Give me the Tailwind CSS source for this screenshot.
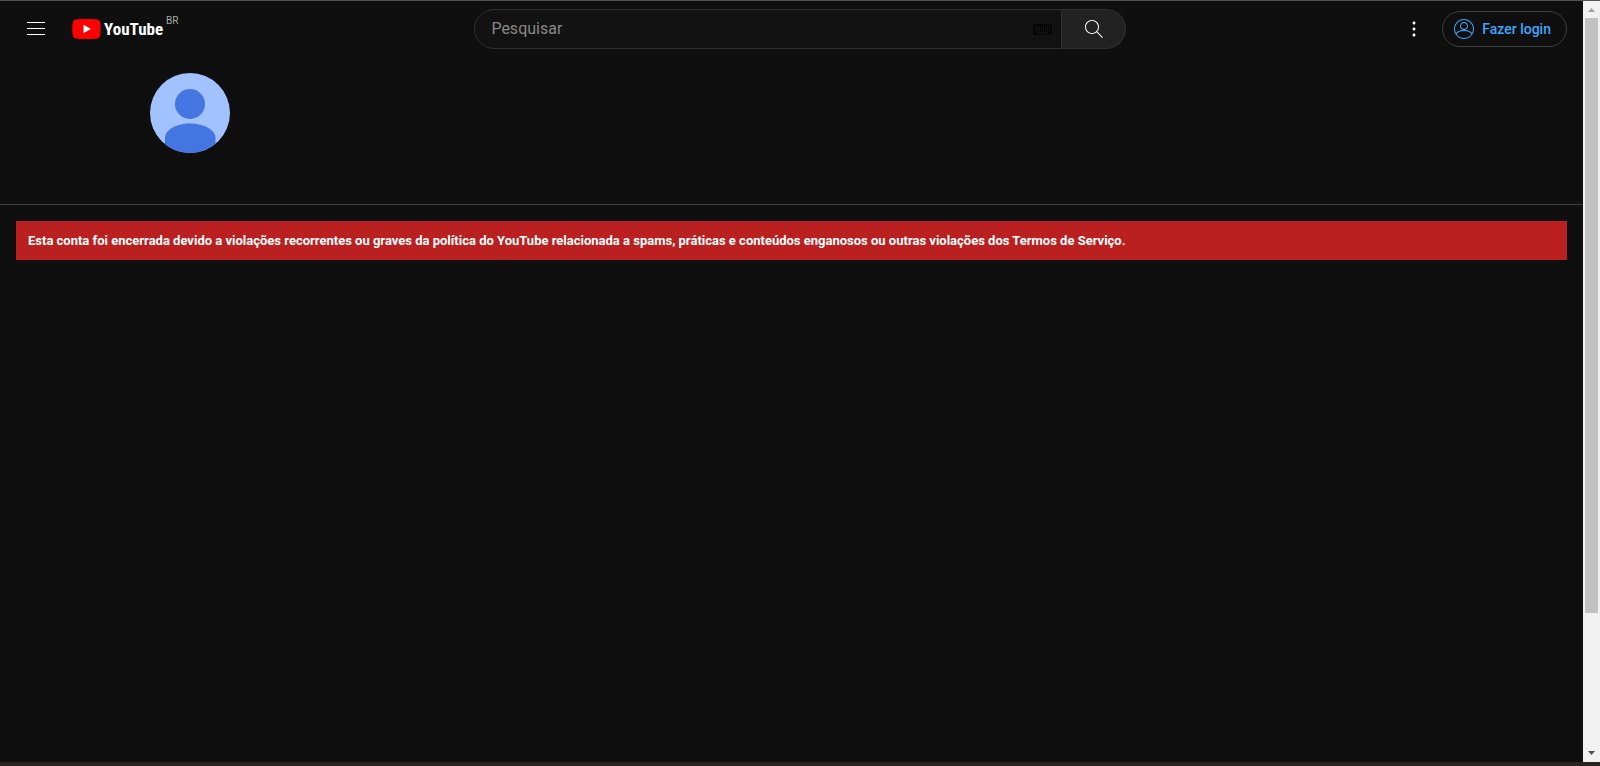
<!DOCTYPE html>
<html lang="pt-BR">
<head>
<meta charset="utf-8">
<meta name="viewport" content="width=device-width, initial-scale=1">
<title>YouTube</title>
<script src="https://cdn.jsdelivr.net/npm/@tailwindcss/browser@4"></script>
</head>
<body class="flex h-screen flex-col overflow-hidden border-t border-[#535353] bg-[#0f0f0f] font-[Roboto,sans-serif] text-white">
<div class="flex min-h-0 flex-1">
  <div class="min-w-0 flex-1">
    <header class="flex h-14 items-center justify-between px-4">
      <div class="flex items-center pr-7">
        <button type="button" aria-label="Guia" class="flex size-10 items-center justify-center">
          <svg class="size-6" viewBox="0 0 24 24" fill="#fff"><path d="M21 6H3V5h18v1zm0 5H3v1h18v-1zm0 6H3v1h18v-1z"/></svg>
        </button>
        <a href="#" aria-label="Página inicial do YouTube" class="flex h-14 items-center gap-[3px] pl-4">
          <svg class="h-5 w-[29px]" viewBox="0 0 29 20"><path fill="#f00" d="M28 3.1A3.6 3.6 0 0 0 25.400.6C23.100 0 14.500 0 14.500 0S5.900 0 3.600.6A3.600 3.600 0 0 0 1 3.100C.3 5.400.3 10 .3 10s0 4.600.7 6.900a3.600 3.600 0 0 0 2.600 2.500c2.300.6 10.900.6 10.900.6s8.600 0 10.900-.6a3.600 3.600 0 0 0 2.600-2.500c.7-2.300.7-6.900.7-6.900s0-4.600-.7-6.900z"/><path fill="#fff" d="m11.500 14.300 7.400-4.300-7.400-4.300z"/></svg>
          <span class="font-['Roboto_Condensed','Liberation_Sans_Narrow',Roboto,sans-serif] text-[17px] leading-6 font-bold">YouTube</span>
          <span class="mb-4 text-[10px] leading-3 text-[#aaa]">BR</span>
        </a>
      </div>
      <form class="flex h-10 w-[652px] max-w-1/2" role="search">
        <div class="flex min-w-0 flex-1 items-center rounded-l-full border border-[#303030] bg-[#121212] pr-[9px] pl-4">
          <input type="text" aria-label="Pesquisar" placeholder="Pesquisar" class="min-w-0 flex-1 bg-transparent text-base leading-6 outline-none placeholder:text-[#888]">
          <svg class="h-[11px] w-[19px]" viewBox="0 0 19 11"><rect width="19" height="11" rx="2" fill="#060606"/><path d="M2 3h15M2 5h15M2 7h15" stroke="#1c1c1c" stroke-dasharray="1 1"/><path d="M4 9h11" stroke="#1c1c1c"/></svg>
        </div>
        <button type="submit" aria-label="Pesquisar" class="flex w-16 items-center justify-center rounded-r-full border border-l-0 border-[#303030] bg-[#222]">
          <svg class="size-6" viewBox="0 0 24 24" fill="#fff"><path d="m20.870 20.170-5.590-5.590C16.350 13.350 17 11.750 17 10c0-3.870-3.130-7-7-7s-7 3.130-7 7 3.130 7 7 7c1.750 0 3.350-.65 4.580-1.710l5.590 5.590.7-.71zM10 16c-3.310 0-6-2.690-6-6s2.690-6 6-6 6 2.690 6 6-2.690 6-6 6z"/></svg>
        </button>
      </form>
      <div class="flex items-center gap-2">
        <button type="button" aria-label="Configurações" class="flex size-10 items-center justify-center">
          <svg class="size-6" viewBox="0 0 24 24" fill="#fff"><path d="M12 16.500c.83 0 1.500.67 1.500 1.500s-.67 1.500-1.500 1.500-1.500-.67-1.500-1.500.67-1.500 1.500-1.500zM10.500 12c0 .83.67 1.500 1.500 1.500s1.500-.67 1.500-1.500-.67-1.500-1.500-1.500-1.500.67-1.500 1.500zm0-6c0 .83.67 1.500 1.500 1.500s1.500-.67 1.500-1.500-.67-1.500-1.500-1.500-1.500.67-1.500 1.500z"/></svg>
        </button>
        <a href="#" class="flex h-9 items-center gap-[6px] rounded-full border border-[#3f3f3f] pr-[15px] pl-[9px] text-sm font-medium whitespace-nowrap text-[#3ea6ff]">
          <svg class="size-6" viewBox="0 0 24 24" fill="#3ea6ff"><path d="M12 2C6.480 2 2 6.480 2 12s4.480 10 10 10 10-4.480 10-10S17.520 2 12 2zM12 3c4.960 0 9 4.040 9 9 0 1.420-.34 2.760-.93 3.960-1.530-1.720-3.980-2.890-7.380-3.030C14.570 12.600 16 10.970 16 9c0-2.210-1.790-4-4-4S8 6.790 8 9c0 1.970 1.430 3.600 3.310 3.930-3.400.14-5.850 1.310-7.380 3.030C3.340 14.760 3 13.420 3 12c0-4.960 4.040-9 9-9zM9 9c0-1.650 1.350-3 3-3s3 1.350 3 3-1.350 3-3 3-3-1.350-3-3zM12 21c-3.160 0-5.940-1.640-7.550-4.120C6.010 14.930 8.610 13.900 12 13.900c3.390 0 5.990 1.030 7.550 2.980C17.940 19.360 15.160 21 12 21z"/></svg>
          Fazer login
        </a>
      </div>
    </header>
    <main>
      <section class="h-[148px] border-b border-[#3f3f3f] pt-4 pl-[150px]">
        <svg class="size-20 rounded-full" viewBox="0 0 80 80" role="img" aria-label="Avatar do canal"><rect width="80" height="80" fill="#a1c2ff"/><g fill="#4475e0"><circle cx="40" cy="31" r="15"/><path d="M15 80V65c0-8 11-14.500 25-14.500s25.500 6.500 25.500 14.500v15z"/></g></svg>
      </section>
      <p role="alert" class="mx-4 mt-4 bg-[#ba201f] px-3 py-[10px] text-[13px] leading-[19px] font-bold">Esta conta foi encerrada devido a violações recorrentes ou graves da política do YouTube relacionada a spams, práticas e conteúdos enganosos ou outras violações dos Termos de Serviço.</p>
    </main>
  </div>
  <div class="flex w-[17px] shrink-0 flex-col items-center bg-[#f1f1f1]" aria-hidden="true">
    <svg class="h-[17px] w-[17px] shrink-0" viewBox="0 0 17 17"><path fill="#a3a3a3" d="M5 11h7L8.500 7z"/></svg>
    <div class="flex min-h-0 w-full flex-1 flex-col px-[2px]"><div class="grow-9 bg-[#c1c1c1]"></div><div class="grow-2"></div></div>
    <svg class="h-[17px] w-[17px] shrink-0" viewBox="0 0 17 17"><path fill="#505050" d="M5 6h7l-3.500 4z"/></svg>
  </div>
</div>
<footer class="h-1 shrink-0 bg-[#272422]"></footer>
</body>
</html>
